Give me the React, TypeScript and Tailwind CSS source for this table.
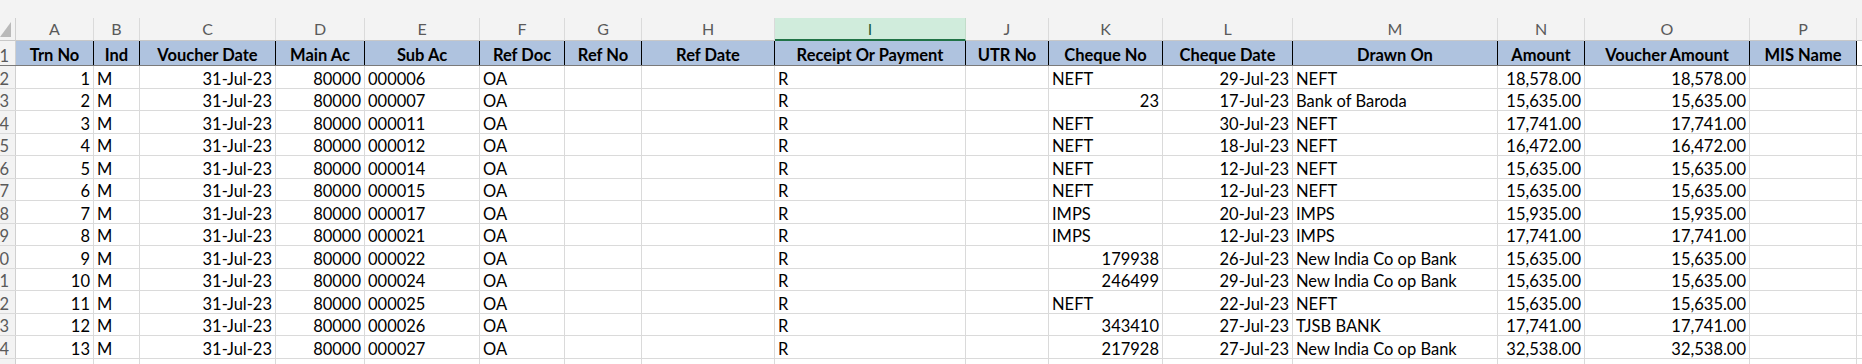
import React from "react";

type Col = { letter: string; w: number; head: string };
const cols: Col[] = [
  { letter: "A", w: 78, head: "Trn No" },
  { letter: "B", w: 46, head: "Ind" },
  { letter: "C", w: 136, head: "Voucher Date" },
  { letter: "D", w: 89, head: "Main Ac" },
  { letter: "E", w: 115, head: "Sub Ac" },
  { letter: "F", w: 85, head: "Ref Doc" },
  { letter: "G", w: 77, head: "Ref No" },
  { letter: "H", w: 133, head: "Ref Date" },
  { letter: "I", w: 191, head: "Receipt Or Payment" },
  { letter: "J", w: 83, head: "UTR No" },
  { letter: "K", w: 114, head: "Cheque No" },
  { letter: "L", w: 130, head: "Cheque Date" },
  { letter: "M", w: 205, head: "Drawn On" },
  { letter: "N", w: 87, head: "Amount" },
  { letter: "O", w: 165, head: "Voucher Amount" },
  { letter: "P", w: 107, head: "MIS Name" },
  { letter: "", w: 60, head: "" },
];

type Row = [string, string, string, string, string, string, string];
const data: Row[] = [
  ["1", "000006", "NEFT", "29-Jul-23", "NEFT", "18,578.00", "18,578.00"],
  ["2", "000007", "23", "17-Jul-23", "Bank of Baroda", "15,635.00", "15,635.00"],
  ["3", "000011", "NEFT", "30-Jul-23", "NEFT", "17,741.00", "17,741.00"],
  ["4", "000012", "NEFT", "18-Jul-23", "NEFT", "16,472.00", "16,472.00"],
  ["5", "000014", "NEFT", "12-Jul-23", "NEFT", "15,635.00", "15,635.00"],
  ["6", "000015", "NEFT", "12-Jul-23", "NEFT", "15,635.00", "15,635.00"],
  ["7", "000017", "IMPS", "20-Jul-23", "IMPS", "15,935.00", "15,935.00"],
  ["8", "000021", "IMPS", "12-Jul-23", "IMPS", "17,741.00", "17,741.00"],
  ["9", "000022", "179938", "26-Jul-23", "New India Co op Bank", "15,635.00", "15,635.00"],
  ["10", "000024", "246499", "29-Jul-23", "New India Co op Bank", "15,635.00", "15,635.00"],
  ["11", "000025", "NEFT", "22-Jul-23", "NEFT", "15,635.00", "15,635.00"],
  ["12", "000026", "343410", "27-Jul-23", "TJSB BANK", "17,741.00", "17,741.00"],
  ["13", "000027", "217928", "27-Jul-23", "New India Co op Bank", "32,538.00", "32,538.00"],
];

function Cell({ w, align, children }: { w: number; align: "l" | "r"; children?: React.ReactNode }) {
  return (
    <div
      className={`shrink-0 h-full border-r border-[#dadada] px-[3px] flex items-end pb-[1px] whitespace-nowrap overflow-hidden ${
        align === "r" ? "justify-end" : "justify-start"
      }`}
      style={{ width: w }}
    >
      {children}
    </div>
  );
}

function RowHead({ n }: { n: string }) {
  return (
    <div className="shrink-0 w-[16px] h-full bg-[#f3f3f3] border-r border-[#d0d0d0] overflow-hidden flex items-end pb-[1px] justify-end pr-[6px] text-[#5a5a5a] whitespace-nowrap">
      {n}
    </div>
  );
}

export default function App() {
  return (
    <div className="w-[1862px] h-[364px] bg-[#f3f3f3] overflow-hidden font-['Lato',sans-serif] text-[16.5px] text-black leading-none">
      <div className="h-[18px]" />
      {/* Column letters */}
      <div className="flex h-[23px] text-[16px]">
        <div className="shrink-0 w-[16px] h-full border-r border-[#d0d0d0] border-b border-b-[#c8c8c8] relative overflow-hidden">
          <svg className="absolute left-0 top-[4px]" width="12" height="15" viewBox="0 0 12 15">
            <polygon points="0,15 11,15 11,0" fill="#b9b9b9" />
          </svg>
        </div>
        {cols.map((c, i) =>
          c.letter === "I" ? (
            <div
              key={i}
              className="shrink-0 h-full bg-[#d0ecdc] border-r border-[#c2dcc9] border-b-2 border-b-[#217346] flex items-center justify-center text-[#1d5e3a]"
              style={{ width: c.w }}
            >
              {c.letter}
            </div>
          ) : (
            <div
              key={i}
              className="shrink-0 h-full border-r border-[#dadada] border-b border-b-[#c8c8c8] flex items-center justify-center text-[#5a5a5a]"
              style={{ width: c.w }}
            >
              {c.letter}
            </div>
          )
        )}
      </div>
      {/* Header row */}
      <div className="flex h-[25px] border-b border-[#7a7a7a]">
        <RowHead n="1" />
        {cols.map((c, i) => (
          <div
            key={i}
            className={`shrink-0 h-full flex items-end pb-[2px] justify-center font-bold whitespace-nowrap ${
              c.letter === "" ? "bg-white" : "bg-[#afc3df] border-r border-black"
            }`}
            style={{ width: c.w }}
          >
            {c.head}
          </div>
        ))}
      </div>
      {/* Data rows */}
      {data.map((r, i) => {
        const chequeNum = /^\d+$/.test(r[2]);
        return (
          <div
            key={i}
            className={`flex bg-white border-b border-[#dadada] ${i % 2 === 0 ? "h-[23px]" : "h-[22px]"}`}
          >
            <RowHead n={String(i + 2)} />
            <Cell w={78} align="r">{r[0]}</Cell>
            <Cell w={46} align="l">M</Cell>
            <Cell w={136} align="r">31-Jul-23</Cell>
            <Cell w={89} align="r">80000</Cell>
            <Cell w={115} align="l">{r[1]}</Cell>
            <Cell w={85} align="l">OA</Cell>
            <Cell w={77} align="l" />
            <Cell w={133} align="l" />
            <Cell w={191} align="l">R</Cell>
            <Cell w={83} align="l" />
            <Cell w={114} align={chequeNum ? "r" : "l"}>{r[2]}</Cell>
            <Cell w={130} align="r">{r[3]}</Cell>
            <Cell w={205} align="l">{r[4]}</Cell>
            <Cell w={87} align="r">{r[5]}</Cell>
            <Cell w={165} align="r">{r[6]}</Cell>
            <Cell w={107} align="l" />
            <Cell w={60} align="l" />
          </div>
        );
      })}
      <div className="flex h-[23px] bg-white">
        <div className="shrink-0 w-[16px] h-full bg-[#f3f3f3] border-r border-[#d0d0d0]" />
        {cols.map((c, i) => (
          <div key={i} className="shrink-0 h-full border-r border-[#dadada]" style={{ width: c.w }} />
        ))}
      </div>
    </div>
  );
}
